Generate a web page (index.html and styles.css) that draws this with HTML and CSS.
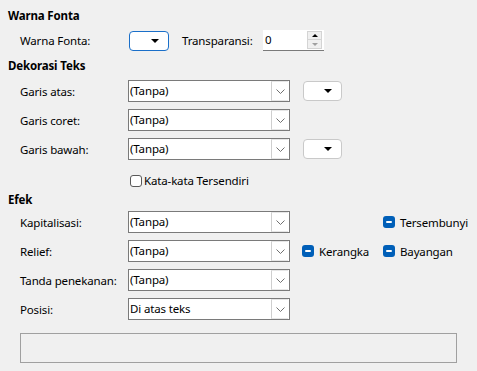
FILE: index.html
```html
<!DOCTYPE html>
<html>
<head>
<meta charset="utf-8">
<link rel="stylesheet" href="styles.css">
</head>
<body>
<div class="page">
  <div class="heading h-first">Warna Fonta</div>
  <div class="row row-color">
    <span class="lbl">Warna Fonta:</span>
    <div class="colorbtn focus"><span class="tri"></span></div>
    <span class="lbl2">Transparansi:</span>
    <div class="spin">
      <span class="spin-val">0</span>
      <div class="spin-btns">
        <div class="spin-up"><span class="up-tri"></span></div>
        <div class="spin-down"><span class="down-tri"></span></div>
      </div>
    </div>
  </div>

  <div class="heading h-deco">Dekorasi Teks</div>
  <div class="row first">
    <span class="lbl">Garis atas:</span>
    <div class="combo"><span class="combo-val">(Tanpa)</span><span class="combo-btn"><svg width="9" height="5" viewBox="0 0 9 5"><path d="M0.5 0.5 L4.5 4.5 L8.5 0.5" fill="none" stroke="#707070" stroke-width="1"/></svg></span></div>
    <div class="colorbtn plain"><span class="tri"></span></div>
  </div>
  <div class="row">
    <span class="lbl">Garis coret:</span>
    <div class="combo"><span class="combo-val">(Tanpa)</span><span class="combo-btn"><svg width="9" height="5" viewBox="0 0 9 5"><path d="M0.5 0.5 L4.5 4.5 L8.5 0.5" fill="none" stroke="#707070" stroke-width="1"/></svg></span></div>
  </div>
  <div class="row">
    <span class="lbl">Garis bawah:</span>
    <div class="combo"><span class="combo-val">(Tanpa)</span><span class="combo-btn"><svg width="9" height="5" viewBox="0 0 9 5"><path d="M0.5 0.5 L4.5 4.5 L8.5 0.5" fill="none" stroke="#707070" stroke-width="1"/></svg></span></div>
    <div class="colorbtn plain"><span class="tri"></span></div>
  </div>
  <div class="row check-row">
    <span class="lbl"></span>
    <span class="cbox"></span>
    <span class="cbox-text">Kata-kata Tersendiri</span>
  </div>

  <div class="heading h-efek">Efek</div>
  <div class="row first-efek">
    <span class="lbl">Kapitalisasi:</span>
    <div class="combo"><span class="combo-val">(Tanpa)</span><span class="combo-btn"><svg width="9" height="5" viewBox="0 0 9 5"><path d="M0.5 0.5 L4.5 4.5 L8.5 0.5" fill="none" stroke="#707070" stroke-width="1"/></svg></span></div>
    <span class="tri-slot first-slot"></span>
    <span class="tristate"></span><span class="tri-text">Tersembunyi</span>
  </div>
  <div class="row">
    <span class="lbl">Relief:</span>
    <div class="combo"><span class="combo-val">(Tanpa)</span><span class="combo-btn"><svg width="9" height="5" viewBox="0 0 9 5"><path d="M0.5 0.5 L4.5 4.5 L8.5 0.5" fill="none" stroke="#707070" stroke-width="1"/></svg></span></div>
    <span class="tri-slot first-slot"><span class="tristate"></span><span class="tri-text">Kerangka</span></span>
    <span class="tristate"></span><span class="tri-text">Bayangan</span>
  </div>
  <div class="row">
    <span class="lbl">Tanda penekanan:</span>
    <div class="combo"><span class="combo-val">(Tanpa)</span><span class="combo-btn"><svg width="9" height="5" viewBox="0 0 9 5"><path d="M0.5 0.5 L4.5 4.5 L8.5 0.5" fill="none" stroke="#707070" stroke-width="1"/></svg></span></div>
  </div>
  <div class="row">
    <span class="lbl">Posisi:</span>
    <div class="combo"><span class="combo-val">Di atas teks</span><span class="combo-btn"><svg width="9" height="5" viewBox="0 0 9 5"><path d="M0.5 0.5 L4.5 4.5 L8.5 0.5" fill="none" stroke="#707070" stroke-width="1"/></svg></span></div>
  </div>

  <div class="preview"></div>
</div>
</body>
</html>
```

FILE: styles.css
```css
html, body {
  margin: 0;
  padding: 0;
  background: #f0f0f0;
}
body {
  font-family: "Noto Sans", "Open Sans", sans-serif;
  font-size: 11.5px;
  letter-spacing: -0.15px;
  color: #000;
  width: 477px;
  height: 371px;
  overflow: hidden;
}
.page {
  padding: 8px 0 0 8px;
}
.heading {
  font-weight: bold;
  height: 16px;
  line-height: 16px;
}
.h-first { margin-top: 0; }
.h-deco { margin-top: 7px; }
.h-efek { margin-top: 5px; }

.row {
  display: flex;
  align-items: center;
  height: 22px;
  margin-top: 7px;
  padding-left: 12px;
}
.row.first { margin-top: 6px; }
.row.first-efek { margin-top: 3px; }
.row-color {
  margin-top: 6px;
  height: 21px;
}
.lbl {
  width: 108px;
  flex: none;
  white-space: nowrap;
}
.lbl2 {
  margin-left: 13px;
  width: 81px;
  white-space: nowrap;
}

.colorbtn {
  box-sizing: border-box;
  width: 40px;
  height: 20px;
  border-radius: 4px;
  background: #fff;
  display: flex;
  align-items: center;
  justify-content: flex-end;
  padding-right: 9px;
}
.colorbtn.focus {
  border: 1px solid #1a6fc9;
  margin-left: 1px;
}
.colorbtn.plain {
  border: 1px solid #c9c9c9;
  margin-left: 13px;
  width: 39px;
}
.tri {
  width: 0;
  height: 0;
  border-left: 4px solid transparent;
  border-right: 4px solid transparent;
  border-top: 4px solid #000;
}

.spin {
  box-sizing: border-box;
  width: 61px;
  height: 21px;
  background: #fff;
  border-bottom: 1px solid #7a7a7a;
  display: flex;
  align-items: center;
  justify-content: space-between;
  padding-left: 2px;
  padding-right: 2px;
}
.spin-val { line-height: 18px; }
.spin-btns {
  display: flex;
  flex-direction: column;
  width: 15px;
}
.spin-up, .spin-down {
  box-sizing: border-box;
  height: 9px;
  background: #f0f0f0;
  border: 1px solid #d4d4d4;
  display: flex;
  align-items: center;
  justify-content: center;
}
.spin-down { border-top: none; }
.up-tri {
  width: 0; height: 0;
  border-left: 3px solid transparent;
  border-right: 3px solid transparent;
  border-bottom: 3px solid #000;
}
.down-tri {
  width: 0; height: 0;
  border-left: 3px solid transparent;
  border-right: 3px solid transparent;
  border-top: 3px solid #a0a0a0;
}

.combo {
  box-sizing: border-box;
  width: 162px;
  height: 22px;
  border: 1px solid #7a7a7a;
  background: #fff;
  display: flex;
  align-items: stretch;
  justify-content: space-between;
  flex: none;
}
.combo-val {
  padding-left: 1px;
  line-height: 20px;
  white-space: nowrap;
}
.combo-btn {
  box-sizing: border-box;
  width: 17px;
  border-left: 1px solid #cfcfcf;
  border-top: 1px solid #e6e6e6;
  border-bottom: 1px solid #e6e6e6;
  margin: 0 1px 0 0;
  display: flex;
  align-items: center;
  justify-content: center;
}

.check-row {
  margin-top: 14px;
  height: 13px;
}
.cbox {
  box-sizing: border-box;
  width: 12px;
  height: 12px;
  border: 1px solid #5a5a5a;
  border-radius: 3px;
  background: #fff;
  margin-left: 2px;
  flex: none;
}
.cbox-text {
  margin-left: 2px;
  white-space: nowrap;
}

.tri-slot {
  flex: none;
  display: flex;
  align-items: center;
}
.first-slot {
  margin-left: 12px;
  width: 81px;
}
.tristate {
  box-sizing: border-box;
  width: 12px;
  height: 12px;
  border-radius: 3px;
  background: #005fb8;
  flex: none;
  display: flex;
  align-items: center;
  justify-content: center;
}
.tristate::after {
  content: "";
  width: 6px;
  height: 2px;
  background: #fff;
  border-radius: 1px;
}
.tri-text {
  margin-left: 5px;
  white-space: nowrap;
}

.preview {
  box-sizing: border-box;
  margin-top: 13px;
  margin-left: 12px;
  width: 437px;
  height: 30px;
  border: 1px solid #a0a0a0;
}
```
